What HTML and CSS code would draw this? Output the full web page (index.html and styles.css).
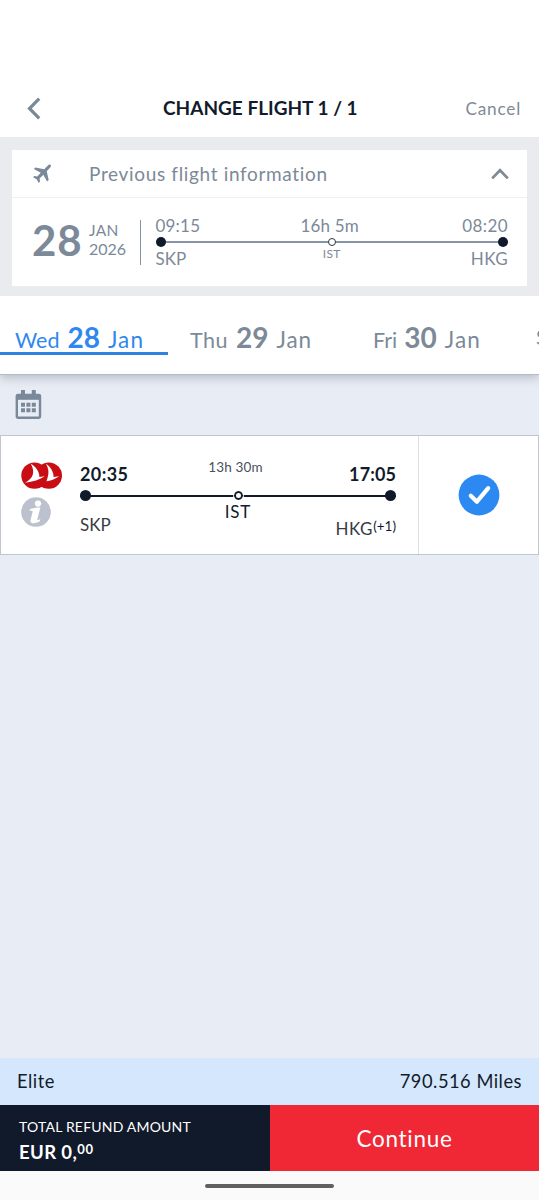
FILE: index.html
```html
<!DOCTYPE html>
<html lang="en">
<head>
<meta charset="utf-8">
<meta name="viewport" content="width=device-width, initial-scale=1">
<title>Change flight</title>
<link rel="stylesheet" href="styles.css">
</head>
<body>
<div class="screen">
  <header class="topbar">
    <svg class="back" width="16" height="24" viewBox="0 0 16 24"><path d="M13.200 2.700 3.500 12.500l9.700 9.800" fill="none" stroke="#7a8999" stroke-width="3.200"/></svg>
    <h1 class="title">CHANGE FLIGHT 1 / 1</h1>
    <span class="cancel">Cancel</span>
  </header>

  <section class="previous">
    <div class="prev-card">
      <div class="prev-head">
        <svg class="plane" width="20" height="20" viewBox="0 0 20 20"><path d="M18.500.8c.8.7.5 1.900-.3 2.800l-3.500 3.700 2 8.800-1.600 1.500-3.800-6.800-3.700 3.800.4 3-1.300 1.300-2-3.700L1 13.300l1.200-1.300 3 .4 3.600-3.700L1.900 5 3.300 3.500l8.900 1.800L15.900 1.400c.8-.8 1.900-1.200 2.600-.6z" fill="#7a8999"/></svg>
        <span class="prev-title">Previous flight information</span>
        <svg class="chevron" width="18" height="12" viewBox="0 0 18 12"><path d="M1.200 10.400 9 2.300l7.800 8.100" fill="none" stroke="#7f8a97" stroke-width="2.800"/></svg>
      </div>
      <div class="prev-body">
        <span class="day">28</span>
        <div class="month"><span class="mon">JAN</span><span class="year">2026</span></div>
        <div class="prev-route">
          <div class="row prev-times"><span>09:15</span><span class="dur">16h 5m</span><span>08:20</span></div>
          <div class="track"><i class="dot"></i><i class="stop"></i><i class="dot"></i></div>
          <div class="row prev-ports"><span>SKP</span><span class="via">IST</span><span>HKG</span></div>
        </div>
      </div>
    </div>
  </section>

  <nav class="dates">
    <div class="date active"><span class="wd">Wed</span><b>28</b><span class="mo">Jan</span></div>
    <div class="date thu"><span class="wd">Thu</span><b>29</b><span class="mo">Jan</span></div>
    <div class="date fri"><span class="wd">Fri</span><b>30</b><span class="mo">Jan</span></div>
    <div class="date sat"><span class="wd">Sat</span></div>
  </nav>

  <main class="results">
    <svg class="calendar" width="28" height="30" viewBox="0 0 28 30"><path d="M6 0h4v5H6zM16.800 0h4v5h-4z" fill="#7a8999"/><rect x="1.800" y="5" width="23.200" height="22.800" rx="1.500" fill="none" stroke="#7a8999" stroke-width="2.400"/><path d="M1.500 4h23.800v5.800H1.500z" fill="#7a8999"/><path d="M6 12.800h4v4H6zM11.400 12.800h4v4h-4zM16.800 12.800h4v4h-4zM6 18.200h4v4H6zM11.400 18.200h4v4h-4zM16.800 18.200h4v4h-4z" fill="#7a8999"/></svg>
    <article class="flight">
      <div class="marks">
        <svg class="airline" width="42" height="28" viewBox="0 0 42 28">
          <circle cx="27.800" cy="13.600" r="13.200" fill="#c90d14"/>
          <path d="M25 1.800c4.800 3.400 7.600 8 7.600 13.200l5.600-.8c-4.200 3.200-9.400 4.900-15.200 5.400 5-4.200 6-10.300 2-17.800z" fill="#fff"/>
          <circle cx="13.500" cy="13.600" r="13.200" fill="#c90d14"/>
          <path d="M9.800 1.800c5.600 3.400 8.600 8 8.600 13.200l5.400-.7c-5.200 3.500-11.700 5.500-19.800 6.400C12.500 16.500 14.300 10 9.800 1.800z" fill="#fff"/>
        </svg>
        <svg class="info" width="30" height="30" viewBox="0 0 30 30"><circle cx="15" cy="15" r="14.800" fill="#bcc2cd"/><circle cx="17" cy="6.600" r="3.100" fill="#fff"/><path d="M9 12.100c3-1 6.300-1.700 10.400-1.700l-3 11.600c-.2.900.2 1.300 1.100.9l1.800-.8-.4 1.900c-2.900 2.600-10.400 3.600-9.400-.8l2.100-8.200c.2-.8-.1-1.100-1-1.200l-2.100-.2z" fill="#fff"/></svg>
      </div>
      <div class="journey">
        <div class="row times"><b class="dep">20:35</b><span class="dur">13h 30m</span><b class="arr">17:05</b></div>
        <div class="track dark"><i class="dot"></i><i class="stop"></i><i class="dot"></i></div>
        <div class="row ports"><span class="from">SKP</span><span class="via">IST</span><span class="to">HKG<span class="plus">(+1)</span></span></div>
      </div>
      <div class="select">
        <svg width="42" height="42" viewBox="0 0 42 42"><circle cx="21" cy="21" r="20.400" fill="#2d89f2"/><path d="m12.800 21.700 6.100 6L30.200 14.200" fill="none" stroke="#fff" stroke-width="4.200" stroke-linejoin="round" stroke-linecap="round"/></svg>
      </div>
    </article>
  </main>

  <footer>
    <div class="status"><span class="tier">Elite</span><span class="miles">790.516 Miles</span></div>
    <div class="actions">
      <div class="total"><span class="label">TOTAL REFUND AMOUNT</span><span class="amount">EUR 0,<span class="cents">00</span></span></div>
      <button class="continue">Continue</button>
    </div>
    <div class="gesture"><i></i></div>
  </footer>
</div>
</body>
</html>
```

FILE: styles.css
```css
* { box-sizing: border-box; }
body { margin: 0; font-family: Lato, "Noto Sans", sans-serif; color: #121b2b; background: #fff; }
svg { display: block; flex: none; }
span, b { white-space: nowrap; }
.screen { width: 539px; height: 1200px; overflow: hidden; display: flex; flex-direction: column; }

.topbar { height: 137px; flex: none; padding: 79px 19px 0 26px; display: grid; grid-template-columns: 137px 1fr auto; align-items: center; }
.title { margin: 0; font-size: 19px; font-weight: 700; line-height: 24px; letter-spacing: 0; white-space: nowrap; }
.cancel { font-size: 17.200px; color: #7f8a97; letter-spacing: .8px; margin-right: -1px; }

.previous { height: 159px; flex: none; padding: 13px 12px 10px; background: #eaebee; position: relative; z-index: 2; }
.prev-card { height: 136px; background: #fff; color: #7c8998; }
.prev-head { height: 48px; border-bottom: 1px solid #eff0f2; display: flex; align-items: center; padding: 0 18px 0 20px; }
.prev-title { flex: 1; margin-left: 37px; font-size: 19px; line-height: 24px; letter-spacing: .66px; }
.prev-body { height: 88px; display: flex; padding: 15px 19px 0 20px; }
.day { width: 57px; font-size: 42px; font-weight: 700; line-height: 54px; letter-spacing: .8px; }
.month { width: 52px; height: 45px; margin-top: 7px; border-right: 1px solid #8794a3; display: flex; flex-direction: column; font-size: 15.500px; line-height: 19px; }
.mon { padding-top: 1px; letter-spacing: .3px; }
.year { font-size: 16px; line-height: 18px; }
.prev-route { flex: 1; margin-left: 14.500px; font-size: 17px; }
.row { display: grid; grid-template-columns: 1fr auto 1fr; }
.row > :last-child { justify-self: end; }
.prev-times { line-height: 26px; height: 24px; letter-spacing: .2px; }
.prev-times > :last-child { margin-right: 0; letter-spacing: .4px; }
.prev-times > .dur { margin-left: -4px; }
.prev-ports { line-height: 24px; }
.prev-ports > :last-child { letter-spacing: .4px; }
.prev-ports .via { font-size: 12px; line-height: 14px; letter-spacing: .4px; }
.track { height: 10px; display: flex; justify-content: space-between; align-items: center; background: linear-gradient(#8794a3, #8794a3) center / 100% 2px no-repeat; }
.dot { width: 10px; height: 10px; border-radius: 50%; background: #101a2a; }
.stop { width: 8px; height: 8px; border-radius: 50%; border: 1.500px solid #2c3642; background: #fff; }

.dates { height: 79px; flex: none; background: #fff; display: flex; color: #7c8998; border-bottom: 1px solid #b5bbc3; box-shadow: 0 3px 9px rgba(70, 80, 100, .3); position: relative; z-index: 1; margin-bottom: -1px; }
.date { display: flex; align-items: baseline; height: 59px; padding: 24px 0 0 15px; flex: none; font-size: 21.500px; line-height: 34px; }
.date b { font-size: 28px; margin: 0 8px 0 8px; }
.mo { font-size: 22.500px; letter-spacing: 1.100px; }
.active { width: 168px; color: #2f88ee; border-bottom: 3px solid #2f82df; }
.thu { width: 183px; padding-left: 22px; }
.thu .wd { letter-spacing: .5px; }
.thu .mo { letter-spacing: .9px; }
.fri { width: 163px; padding-left: 22px; }
.fri b { margin-left: 7px; }
.sat { padding-left: 22px; }

.results { flex: 1; background: #e8ecf4; padding-top: 16px; }
.calendar { margin-left: 15px; }
.flight { margin-top: 15px; height: 120px; background: #fff; border: 1px solid #c0c6cf; display: grid; grid-template-columns: 79px 316px 22px 1fr; }
.marks { padding: 26px 0 0 20px; }
.info { margin-top: 7px; }
.journey { padding-top: 19px; }
.times { height: 35px; align-items: start; }
.times b { font-size: 18px; line-height: 24px; margin-top: 7px; letter-spacing: .4px; }
.times .arr { letter-spacing: .1px; }
.times .dur { font-size: 13.500px; line-height: 24px; color: #4a515c; margin-left: -5px; letter-spacing: .15px; }
.dark.track { height: 11px; background: linear-gradient(#101a2a, #101a2a) center / 100% 2px no-repeat; }
.dark .dot { width: 11px; height: 11px; }
.dark .stop { width: 9px; height: 9px; border: 2px solid #101a2a; outline: 1px solid #fff; }
.ports { font-size: 17px; line-height: 24px; align-items: start; color: #373c46; }
.ports .from { margin-top: 12px; }
.ports .via { margin-top: -1px; color: #121b2b; letter-spacing: .8px; }
.ports .to { margin-top: 16px; letter-spacing: .6px; }
.plus { font-size: 13.500px; line-height: 1; position: relative; top: -4px; color: #121b2b; letter-spacing: 0; }
.select { grid-column: 4; border-left: 1px solid #dcdfe4; display: grid; place-items: center; }

.status { height: 47px; background: #d5e7fc; padding: 0 17px 1px; display: flex; justify-content: space-between; align-items: center; font-size: 18.300px; }
.tier, .miles { letter-spacing: .5px; }
.actions { height: 66px; display: grid; grid-template-columns: 270px 1fr; }
.total { background: #111a2b; color: #fff; padding: 12px 0 0 19px; display: flex; flex-direction: column; }
.label { font-size: 14px; line-height: 20px; letter-spacing: .2px; }
.amount { font-size: 18.500px; line-height: 24px; font-weight: 700; margin-top: 3px; letter-spacing: .4px; }
.cents { font-size: 13px; line-height: 1; position: relative; top: -5px; letter-spacing: .8px; }
.continue { border: 0; padding: 1px 0 0; background: #f02735; color: #fff; font: 22.500px/30px Lato, sans-serif; letter-spacing: .7px; }
.gesture { height: 29px; background: #fafafa; display: grid; place-items: center; }
.gesture i { width: 129px; height: 4px; border-radius: 2px; background: #606060; }
```
